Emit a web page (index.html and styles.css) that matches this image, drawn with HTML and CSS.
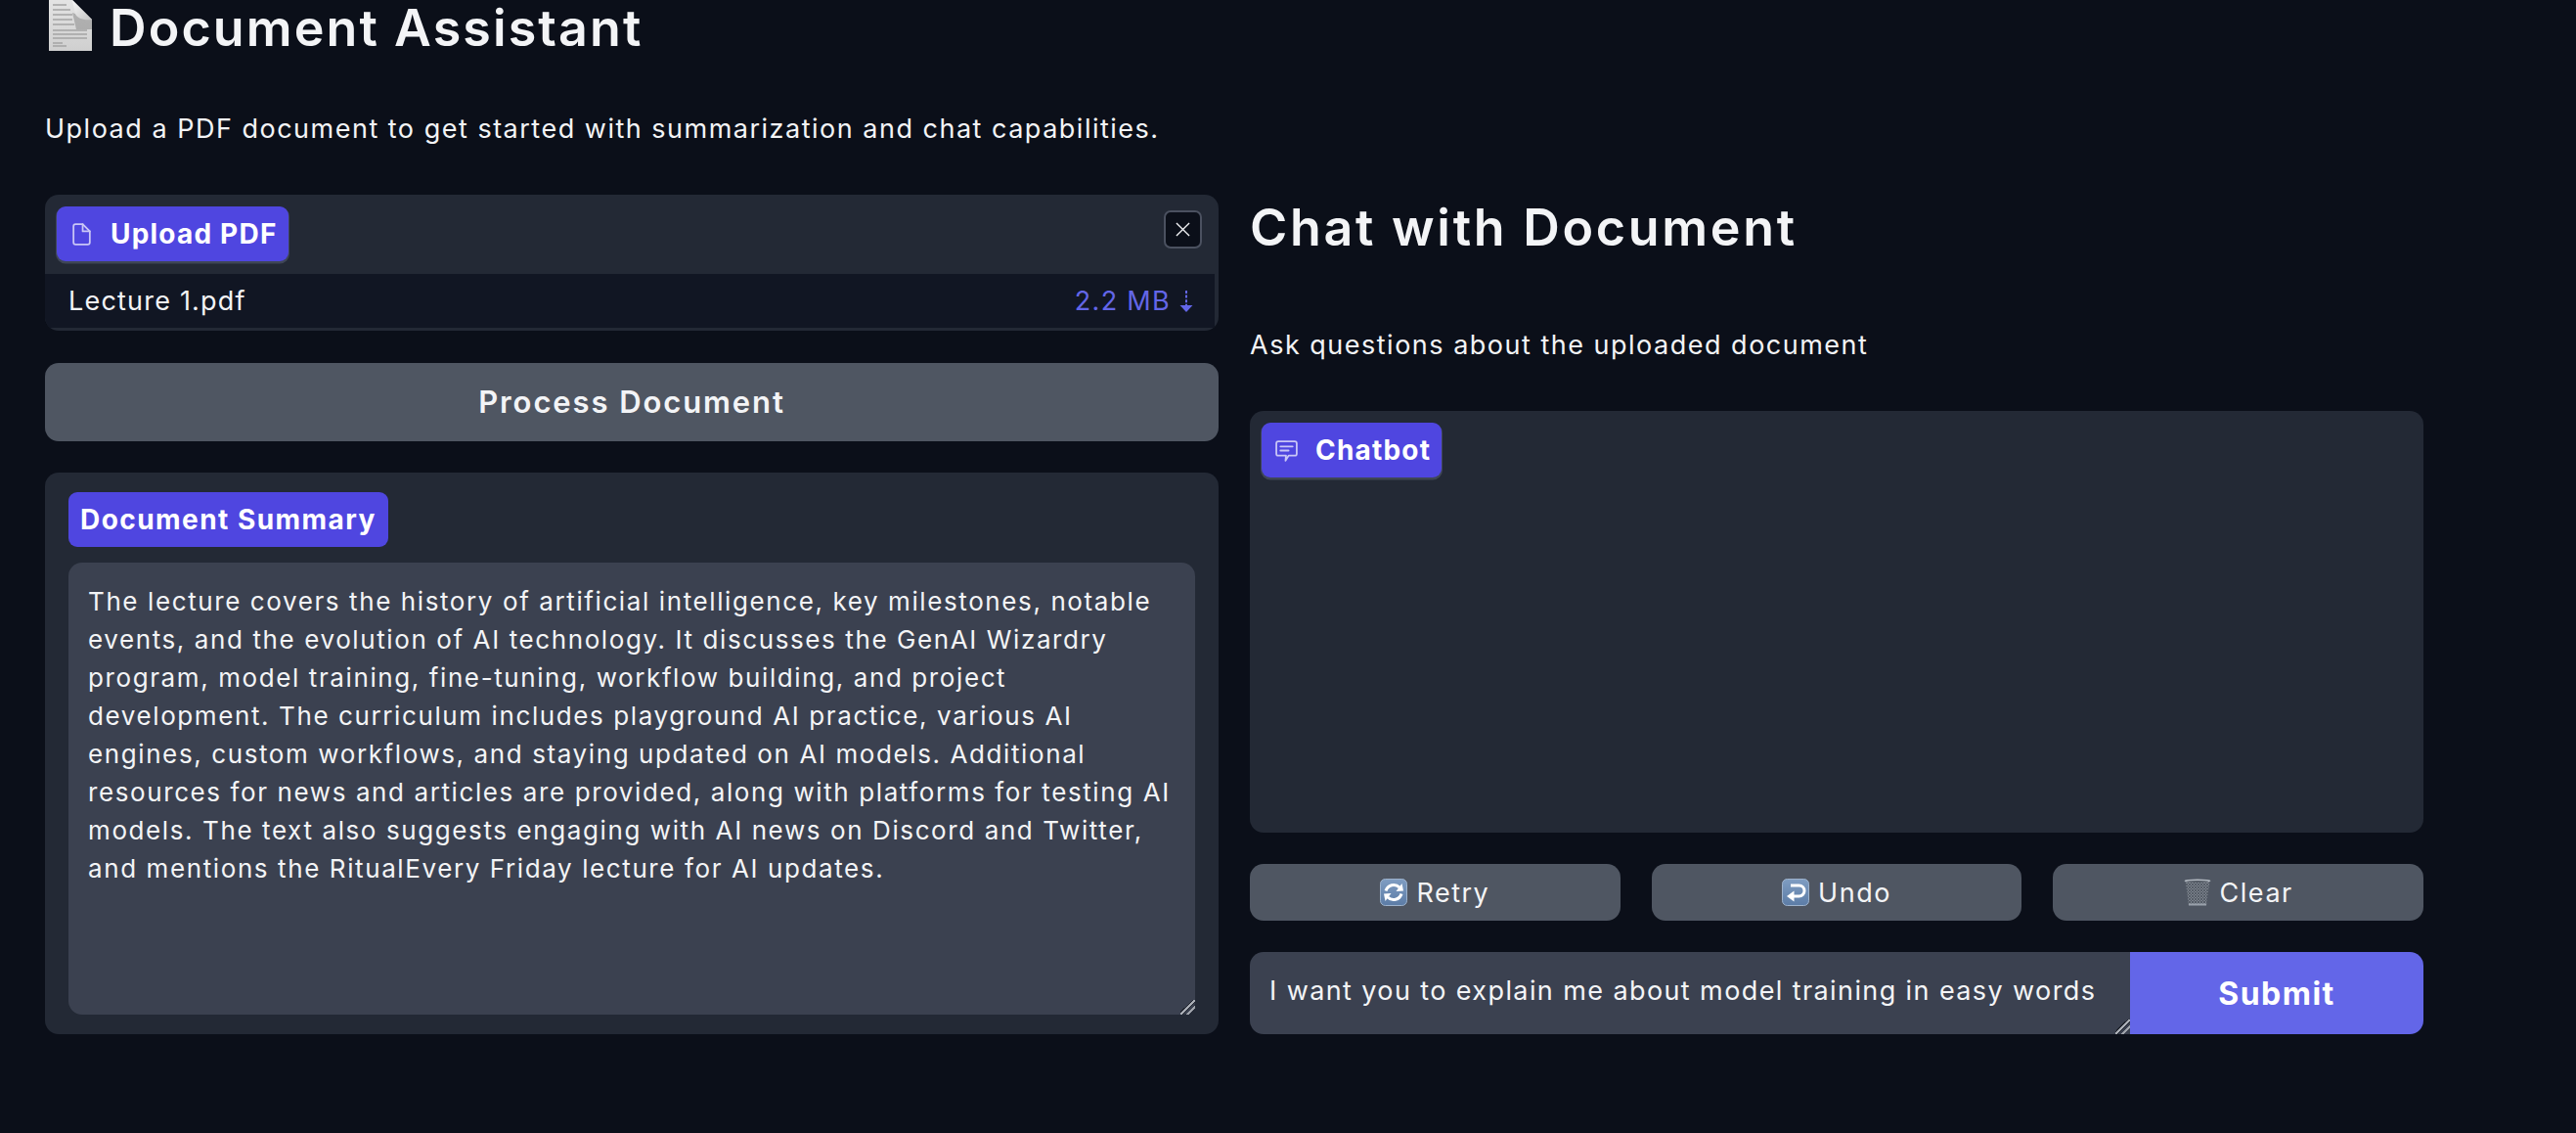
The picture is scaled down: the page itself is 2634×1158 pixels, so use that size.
FILE: index.html
```html
<!DOCTYPE html>
<html lang="en">
<head>
    <meta charset="UTF-8">
    <meta name="viewport" content="width=device-width, initial-scale=1.0">
    <title>Document Assistant</title>
    <link rel="stylesheet" href="styles.css">
</head>
<body>
    <h1 class="title">
        <svg class="page-emoji" viewBox="0 0 44 52">
            <defs>
                <linearGradient id="sheet" x1="0" y1="0" x2="0" y2="1">
                    <stop offset="0" stop-color="#e4e4e4"/>
                    <stop offset="1" stop-color="#cfcfcf"/>
                </linearGradient>
                <linearGradient id="fold" x1="0" y1="0" x2="1" y2="1">
                    <stop offset="0" stop-color="#f8f8f8"/>
                    <stop offset="1" stop-color="#c4c4c4"/>
                </linearGradient>
            </defs>
            <path d="M0 0H24L44 20V52H0Z" fill="url(#sheet)"/>
            <path d="M24 13L44 20V30H28Z" fill="#8b8b8b" opacity=".55"/>
            <path d="M4 5H18M4 10H22M4 15H24M4 20H24M4 25H26" stroke="#a4a4a4" stroke-width="1.6"/>
            <path d="M4 31H39M4 35H39M4 39H39M4 44H14M4 47H18" stroke="#a4a4a4" stroke-width="1.4"/>
            <path d="M24 0L44 20C36 21 29 19 27 14Z" fill="url(#fold)"/>
        </svg>
        <span class="title-text">Document Assistant</span>
    </h1>
    <p class="intro">Upload a PDF document to get started with summarization and chat capabilities.</p>

    <main class="columns">
        <section class="col">
            <div class="upload">
                <div class="upload-head">
                    <span class="tag">
                        <svg class="tag-icon" viewBox="0 0 24 24" fill="none" stroke="#c9c6f6" stroke-width="1.7" stroke-linecap="round" stroke-linejoin="round">
                            <path d="M13 2H6a2 2 0 0 0-2 2v16a2 2 0 0 0 2 2h12a2 2 0 0 0 2-2V9z"/>
                            <path d="M13 2v7h7"/>
                        </svg>
                        Upload PDF
                    </span>
                    <button class="close" aria-label="Remove">
                        <svg viewBox="0 0 16 16" fill="none" stroke="#f3f4f6" stroke-width="1.4"><path d="M1 1L15 15M15 1L1 15"/></svg>
                    </button>
                </div>
                <div class="file-row">
                    <span>Lecture 1.pdf</span>
                    <span class="file-size">
                        2.2 MB
                        <svg class="dl" viewBox="0 0 14 22">
                            <path d="M7 0V15" stroke="#6366e8" stroke-width="2" stroke-dasharray="3 1.6"/>
                            <path d="M0.5 15H13.5L7 22Z" fill="#6366e8"/>
                        </svg>
                    </span>
                </div>
            </div>

            <button class="btn btn-process">Process Document</button>

            <div class="summary">
                <span class="tag tag-plain">Document Summary</span>
                <textarea class="summary-text" readonly>The lecture covers the history of artificial intelligence, key milestones, notable events, and the evolution of AI technology. It discusses the GenAI Wizardry program, model training, fine-tuning, workflow building, and project development. The curriculum includes playground AI practice, various AI engines, custom workflows, and staying updated on AI models. Additional resources for news and articles are provided, along with platforms for testing AI models. The text also suggests engaging with AI news on Discord and Twitter, and mentions the RitualEvery Friday lecture for AI updates.</textarea>
            </div>
        </section>

        <section class="col">
            <div class="chat-head">
                <h2>Chat with Document</h2>
                <p>Ask questions about the uploaded document</p>
            </div>

            <div class="chatbot">
                <span class="tag">
                    <svg class="tag-icon" viewBox="0 0 24 24" fill="none" stroke="#c9c6f6" stroke-width="1.7" stroke-linecap="round" stroke-linejoin="round">
                        <path d="M4 3H20a2 2 0 0 1 2 2V15a2 2 0 0 1-2 2H14L11 22L11.5 17H4a2 2 0 0 1-2-2V5a2 2 0 0 1 2-2Z"/>
                        <path d="M6 8H18M6 12H14"/>
                    </svg>
                    Chatbot
                </span>
            </div>

            <div class="actions">
                <button class="btn btn-small">
                    <svg class="emoji" viewBox="0 0 28 28">
                        <defs>
                            <linearGradient id="blue" x1="0" y1="0" x2="0" y2="1">
                                <stop offset="0" stop-color="#7f9dc2"/>
                                <stop offset="1" stop-color="#5c7ca6"/>
                            </linearGradient>
                        </defs>
                        <rect x=".5" y=".5" width="27" height="27" rx="5" fill="url(#blue)" stroke="#9db2cc"/>
                        <path d="M6 12.5A8.3 8.3 0 0 1 20 9" fill="none" stroke="#fff" stroke-width="3"/>
                        <path d="M16.5 13L24 12.5L22.5 5Z" fill="#fff"/>
                        <path d="M22 15.5A8.3 8.3 0 0 1 8 19" fill="none" stroke="#fff" stroke-width="3"/>
                        <path d="M11.5 15L4 15.5L5.5 23Z" fill="#fff"/>
                    </svg>
                    Retry
                </button>
                <button class="btn btn-small">
                    <svg class="emoji" viewBox="0 0 28 28">
                        <rect x=".5" y=".5" width="27" height="27" rx="5" fill="url(#blue)" stroke="#9db2cc"/>
                        <path d="M9 7H17.5A5.5 5.5 0 0 1 17.5 18H11" fill="none" stroke="#fff" stroke-width="3"/>
                        <path d="M12.5 12.5V23.5L5 18Z" fill="#fff"/>
                    </svg>
                    Undo
                </button>
                <button class="btn btn-small">
                    <svg class="emoji" viewBox="0 0 28 28">
                        <defs>
                            <pattern id="mesh" width="3" height="3" patternUnits="userSpaceOnUse">
                                <rect width="3" height="3" fill="#7b828c"/>
                                <path d="M0 0L3 3M3 0L0 3" stroke="#4c535d" stroke-width=".8"/>
                            </pattern>
                        </defs>
                        <path d="M1.5 2H26.5L23 27H5Z" fill="url(#mesh)"/>
                        <ellipse cx="14" cy="2.2" rx="13.5" ry="1.8" fill="#b4bac2"/>
                        <ellipse cx="14" cy="3" rx="11" ry="1" fill="#555c66"/>
                        <path d="M4.8 25.5H23.2L23 27.6H5Z" fill="#9aa1ab"/>
                    </svg>
                    Clear
                </button>
            </div>

            <div class="ask">
                <textarea class="ask-input" rows="1">I want you to explain me about model training in easy words</textarea>
                <button class="btn-submit">Submit</button>
            </div>
        </section>
    </main>
</body>
</html>
```

FILE: styles.css
```css
* {
    box-sizing: border-box;
}

body {
    margin: 0;
    padding: 0 156px 0 46px;
    min-height: 1158px;
    background: #0b0f19;
    color: #f3f4f6;
    font-family: Inter, "Liberation Sans", sans-serif;
    font-size: 27px;
    letter-spacing: 1.5px;
    overflow: hidden;
}

button,
textarea {
    font: inherit;
    letter-spacing: inherit;
    color: inherit;
}

textarea::-webkit-resizer {
    background: linear-gradient(135deg, transparent 40%, #20242e 40% 44%, #a9adb5 44% 54%, #20242e 54% 58%, transparent 58% 68%, #9ea2aa 68% 78%, transparent 78%);
}

.title {
    display: flex;
    align-items: flex-start;
    gap: 18px;
    height: 52px;
    margin: 0;
    padding-left: 4px;
    font-size: 52px;
    font-weight: 600;
    letter-spacing: 2.1px;
}

.title-text {
    line-height: 58px;
}

.page-emoji {
    width: 44px;
    height: 52px;
    flex: none;
}

.intro {
    margin: 0;
    padding-top: 62px;
    height: 147px;
    line-height: 36px;
}

.columns {
    display: grid;
    grid-template-columns: 1200px 1200px;
    gap: 32px;
}

.col {
    display: flex;
    flex-direction: column;
    gap: 32px;
}

.tag {
    display: inline-flex;
    align-items: center;
    gap: 17px;
    height: 56px;
    padding: 0 11px 0 13px;
    border-radius: 9px;
    background: #4f46e0;
    box-shadow: 0 1.5px 0 1px #3f4656;
    color: #fff;
    font-size: 28px;
    font-weight: 700;
    letter-spacing: 1.2px;
}

.tag-icon {
    width: 25px;
    height: 25px;
    flex: none;
}

.tag-plain {
    align-self: flex-start;
    padding: 0 12px;
    box-shadow: none;
    letter-spacing: 1.45px;
}

.upload {
    height: 139px;
    padding: 0 4px 3px 0;
    border-radius: 14px;
    background: #232935;
    overflow: hidden;
}

.upload-head {
    display: flex;
    justify-content: space-between;
    align-items: flex-start;
    height: 81px;
    padding: 12px 13px 0 12px;
}

.close {
    display: flex;
    align-items: center;
    justify-content: center;
    width: 39px;
    height: 39px;
    margin-top: 4px;
    padding: 0;
    border: 2px solid #4b5160;
    border-radius: 7px;
    background: #0b0f19;
}

.close svg {
    width: 15px;
    height: 15px;
}

.file-row {
    display: flex;
    justify-content: space-between;
    align-items: center;
    height: 55px;
    padding: 0 22px 0 24px;
    background: #111623;
    letter-spacing: 1.2px;
}

.file-size {
    display: flex;
    align-items: center;
    gap: 9px;
    color: #6366e8;
    letter-spacing: 1.3px;
}

.dl {
    width: 14px;
    height: 22px;
    flex: none;
}

.btn {
    border: none;
    border-radius: 14px;
    background: #4f5662;
    color: #f3f4f6;
}

.btn-process {
    height: 80px;
    margin-top: 1px;
    padding-bottom: 2px;
    font-size: 31px;
    font-weight: 600;
    letter-spacing: 1.9px;
}

.summary {
    display: flex;
    flex-direction: column;
    gap: 16px;
    height: 574px;
    padding: 20px 24px 20px 24px;
    border-radius: 14px;
    background: #232935;
}

.summary-text {
    flex: 1;
    padding: 20px 20px 12px;
    border: none;
    border-radius: 14px;
    outline: none;
    background: #3b4150;
    font-size: 26px;
    line-height: 39px;
    letter-spacing: 1.6px;
    resize: vertical;
}

.chat-head {
    height: 189px;
    margin-bottom: -32px;
}

.chat-head h2 {
    margin: 0;
    padding-top: 5px;
    font-size: 52px;
    font-weight: 600;
    line-height: 58px;
    letter-spacing: 2.7px;
}

.chat-head p {
    margin: 0;
    padding-top: 73px;
    line-height: 36px;
}

.chatbot {
    height: 431px;
    margin-top: 32px;
    padding: 12px;
    border-radius: 14px;
    background: #232935;
}

.actions {
    display: grid;
    grid-template-columns: repeat(3, 1fr);
    gap: 32px;
}

.btn-small {
    display: flex;
    align-items: center;
    justify-content: center;
    gap: 9px;
    height: 58px;
    font-size: 27px;
}

.emoji {
    width: 28px;
    height: 28px;
    flex: none;
}

.ask {
    display: flex;
    height: 84px;
    border-radius: 14px;
    overflow: hidden;
}

.ask-input {
    flex: 1;
    padding: 22px 20px 0;
    border: none;
    outline: none;
    background: #3b4150;
    line-height: 36px;
    letter-spacing: 1.4px;
    white-space: nowrap;
    overflow: auto;
    resize: vertical;
}

.btn-submit {
    width: 300px;
    border: none;
    background: #6366e8;
    color: #fff;
    font-size: 32px;
    font-weight: 700;
}
```
